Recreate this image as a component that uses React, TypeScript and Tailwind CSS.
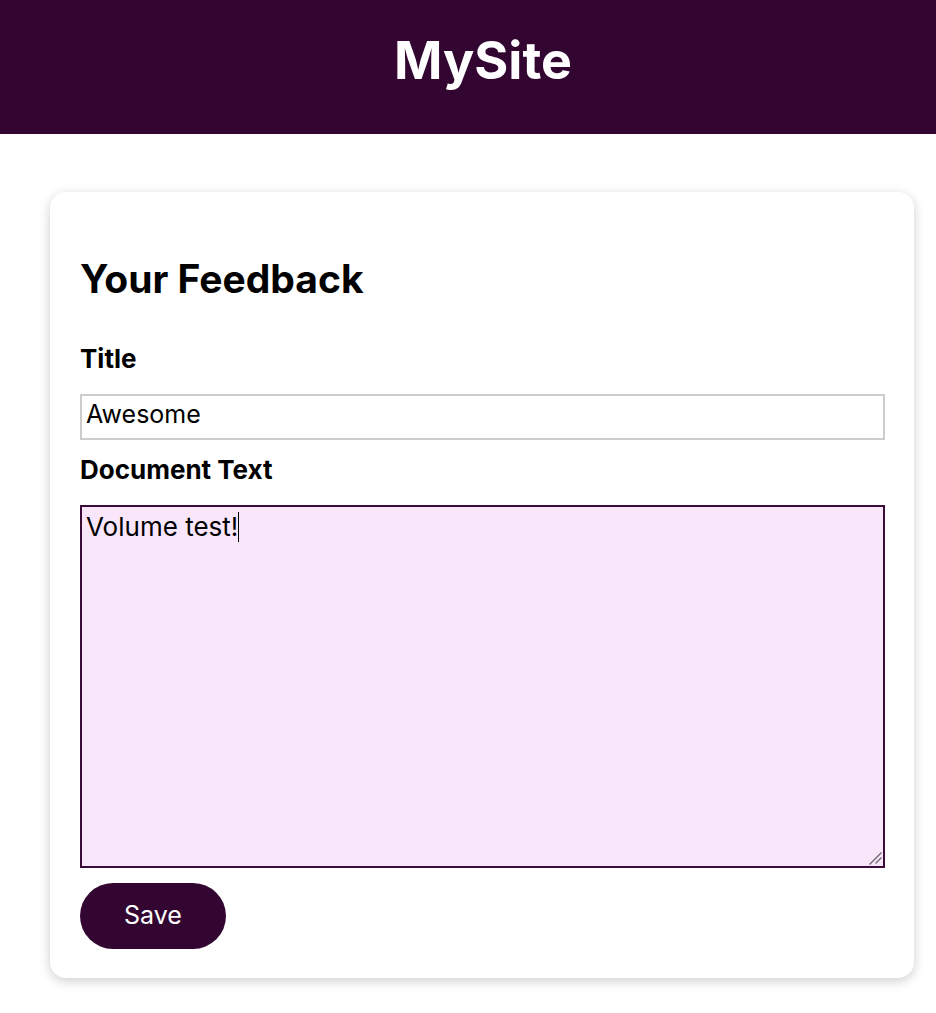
export default function App() {
  return (
    <div className="min-h-screen bg-white text-black" style={{ fontFamily: 'Inter, "Noto Sans", "Noto Sans CJK KR", sans-serif' }}>
      <header className="h-[134px] bg-[#330632] pt-[35px] pl-[30px] text-center">
        <h1 className="text-[52px] font-bold text-white leading-none">MySite</h1>
      </header>

      <main className="ml-[50px] mr-[22px] pt-[58px] pb-[35px]">
        <div className="bg-white rounded-2xl shadow-[0_3px_12px_rgba(0,0,0,0.2)] px-[30px] pr-[29px] pt-[65px] pb-[29px]">
          <h2 className="text-[39px] font-bold leading-[44px]">Your Feedback</h2>

          <label className="block mt-[43px] text-[26px] font-bold leading-[30px]">Title</label>
          <input
            type="text"
            defaultValue="Awesome"
            className="block w-full mt-[20px] h-[46px] border-2 border-[#cccccc] px-[4px] pt-0 pb-[6px] text-[25px] outline-none"
            style={{ fontFamily: 'inherit' }}
          />

          <label className="block mt-[15px] text-[26px] font-bold leading-[30px]">Document Text</label>
          <div className="relative mt-[20px] h-[363px] border-2 border-[#3b0b3a] bg-[#f9e6fb] px-[4px] pt-[4px] text-[26px] leading-[1.2]">
            <span>Volume test!</span>
            <span className="inline-block align-middle w-px h-[30px] bg-black -mt-1" />
            <svg className="absolute right-0 bottom-0" width="14" height="14" viewBox="0 0 14 14">
              <path d="M12.5 0.5 L0.5 12.5 M12.5 5.5 L6.5 11.5" stroke="#6b6b6b" strokeWidth="1.4" />
            </svg>
          </div>

          <button className="block mt-[15px] h-[66px] w-[146px] rounded-full bg-[#330632] text-white text-[25px]">
            Save
          </button>
        </div>
      </main>
    </div>
  )
}
